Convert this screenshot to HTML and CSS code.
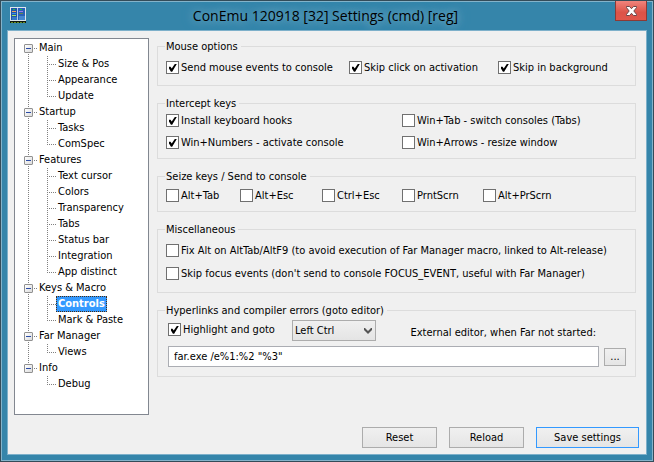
FILE: index.html
```html
<!DOCTYPE html>
<html lang="en">
<head>
<meta charset="utf-8">
<title>ConEmu 120918 [32] Settings (cmd) [reg]</title>
<link rel="stylesheet" href="styles.css">
</head>
<body>
<div class="window">
  <header class="titlebar">
    <svg class="app-icon" viewBox="0 0 16 16" width="16" height="16" shape-rendering="crispEdges" aria-hidden="true">
      <rect width="16" height="14" fill="#dfe6ee"/>
      <rect x="1" y="1" width="6" height="12" fill="#2054a8"/>
      <rect x="8" y="1" width="7" height="12" fill="#2860b8"/>
      <rect x="7" y="1" width="1" height="12" fill="#b8cce4"/>
      <rect x="2" y="10" width="5" height="3" fill="#3478c8"/>
      <rect x="9" y="9" width="6" height="4" fill="#4588d0"/>
      <rect x="3" y="2" width="2" height="1" fill="#18c050"/>
      <rect x="10" y="2" width="2" height="1" fill="#18c050"/>
      <rect x="2" y="4" width="4" height="1" fill="#e8a060"/>
      <rect x="2" y="6" width="4" height="1" fill="#3c90f0"/>
      <rect x="2" y="8" width="4" height="1" fill="#a0e868"/>
      <rect x="9" y="4" width="4" height="1" fill="#a078e8"/>
      <rect x="9" y="6" width="4" height="1" fill="#688850"/>
      <rect y="14" width="16" height="2" fill="#101810"/>
      <path d="M1 15.500h15" stroke="#688c20" stroke-dasharray="2 1"/>
    </svg>
    <h1 class="title">ConEmu 120918 [32] Settings (cmd) [reg]</h1>
    <button class="close" type="button" aria-label="Close">
      <svg viewBox="0 0 11 10" width="11" height="10" aria-hidden="true"><path d="M.5.500h3L5.500 2.700 7.500.500h3v1.200L7.800 5l2.700 3.300v1.200h-3L5.500 7.300 3.500 9.500h-3V8.300L3.200 5 .5 1.700z" fill="#fff" stroke="#6b4648"/></svg>
    </button>
  </header>
  <form class="dialog">
    <div class="main">
      <nav class="tree" aria-label="Settings pages">
        <ul class="roots">
          <li><div class="root"><button class="toggle" type="button" aria-label="Collapse Main"></button><a href="#">Main</a></div>
            <ul class="leaves"><li><a href="#">Size &amp; Pos</a></li><li><a href="#">Appearance</a></li><li><a href="#">Update</a></li></ul></li>
          <li><div class="root"><button class="toggle" type="button" aria-label="Collapse Startup"></button><a href="#">Startup</a></div>
            <ul class="leaves"><li><a href="#">Tasks</a></li><li><a href="#">ComSpec</a></li></ul></li>
          <li><div class="root"><button class="toggle" type="button" aria-label="Collapse Features"></button><a href="#">Features</a></div>
            <ul class="leaves"><li><a href="#">Text cursor</a></li><li><a href="#">Colors</a></li><li><a href="#">Transparency</a></li><li><a href="#">Tabs</a></li><li><a href="#">Status bar</a></li><li><a href="#">Integration</a></li><li><a href="#">App distinct</a></li></ul></li>
          <li><div class="root"><button class="toggle" type="button" aria-label="Collapse Keys &amp; Macro"></button><a href="#">Keys &amp; Macro</a></div>
            <ul class="leaves"><li><a class="selected" href="#" aria-current="page">Controls</a></li><li><a href="#">Mark &amp; Paste</a></li></ul></li>
          <li><div class="root"><button class="toggle" type="button" aria-label="Collapse Far Manager"></button><a href="#">Far Manager</a></div>
            <ul class="leaves"><li><a href="#">Views</a></li></ul></li>
          <li><div class="root"><button class="toggle" type="button" aria-label="Collapse Info"></button><a href="#">Info</a></div>
            <ul class="leaves"><li><a href="#">Debug</a></li></ul></li>
        </ul>
      </nav>
      <div class="groups">
        <fieldset class="mouse">
          <legend>Mouse options</legend>
          <label class="check"><input type="checkbox" checked>Send mouse events to console</label>
          <label class="check"><input type="checkbox" checked>Skip click on activation</label>
          <label class="check"><input type="checkbox" checked>Skip in background</label>
        </fieldset>
        <fieldset class="intercept">
          <legend>Intercept keys</legend>
          <label class="check"><input type="checkbox" checked>Install keyboard hooks</label>
          <label class="check"><input type="checkbox">Win+Tab - switch consoles (Tabs)</label>
          <label class="check"><input type="checkbox" checked>Win+Numbers - activate console</label>
          <label class="check"><input type="checkbox">Win+Arrows - resize window</label>
        </fieldset>
        <fieldset class="seize">
          <legend>Seize keys / Send to console</legend>
          <label class="check"><input type="checkbox">Alt+Tab</label>
          <label class="check"><input type="checkbox">Alt+Esc</label>
          <label class="check"><input type="checkbox">Ctrl+Esc</label>
          <label class="check"><input type="checkbox">PrntScrn</label>
          <label class="check"><input type="checkbox">Alt+PrScrn</label>
        </fieldset>
        <fieldset class="misc">
          <legend>Miscellaneous</legend>
          <label class="check"><input type="checkbox">Fix Alt on AltTab/AltF9 (to avoid execution of Far Manager macro, linked to Alt-release)</label>
          <label class="check"><input type="checkbox">Skip focus events (don't send to console FOCUS_EVENT, useful with Far Manager)</label>
        </fieldset>
        <fieldset class="links">
          <legend>Hyperlinks and compiler errors (goto editor)</legend>
          <div class="row goto">
            <label class="check"><input type="checkbox" checked>Highlight and goto</label>
            <div class="combo">
              <select aria-label="Modifier key"><option>Left Ctrl</option></select>
              <svg class="chevron" viewBox="0 0 8 6" width="8" height="6" aria-hidden="true"><path d="M0 0h1l3 3 3-3h1v2L4 6 0 2z" fill="#555"/></svg>
            </div>
            <label class="caption" for="editor">External editor, when Far not started:</label>
          </div>
          <div class="row">
            <input class="field" id="editor" type="text" value="far.exe /e%1:%2 &quot;%3&quot;">
            <button class="button browse" type="button" aria-label="Browse">...</button>
          </div>
        </fieldset>
      </div>
    </div>
    <footer class="actions">
      <button class="button" type="reset">Reset</button>
      <button class="button" type="button">Reload</button>
      <button class="button primary" type="submit">Save settings</button>
    </footer>
  </form>
</div>
</body>
</html>
```
FILE: styles.css
```css
* { box-sizing: border-box; }

body {
  margin: 0;
  font: 11px/16px "DejaVu Sans Condensed", "DejaVu Sans", sans-serif;
  color: #000;
}

button, input, select { font: inherit; color: inherit; }
ul { margin: 0; padding: 0; list-style: none; }
a { color: inherit; text-decoration: none; }

.window {
  display: flex;
  flex-direction: column;
  min-height: 100vh;
  padding: 0 5px 5px;
  border: 1px solid #344c59;
  background: #3585aa;
  box-shadow: inset 0 0 0 1px #83b3ca;
}

/* Title bar */
.titlebar {
  display: flex;
  align-items: flex-start;
  height: 30px;
  padding-left: 4px;
}
.app-icon { flex: none; margin-top: 6px; }
.title {
  flex: 1;
  margin: 0;
  padding-left: 10px;
  font: 14px/30px "Open Sans", sans-serif;
  text-align: center;
  text-shadow: 0 0 8px #78afc8, 0 0 12px #78afc8;
}
.close {
  display: flex;
  align-items: center;
  justify-content: center;
  width: 32px;
  height: 20px;
  margin-right: 1px;
  padding: 0;
  border: 1px solid #8c3a35;
  border-top: 0;
  background: linear-gradient(#f0847c, #dc5348 60%, #e0564a);
}

.dialog {
  display: flex;
  flex: 1;
  flex-direction: column;
  gap: 12px;
  margin: 0 2px 2px;
  padding: 7px 7px 6px 6px;
  outline: 1px solid #7db0ca;
  background: #f0f0f0;
}
.main { display: flex; flex: 1; gap: 8px; }

/* Page tree */
.tree {
  flex: none;
  width: 135px;
  padding: 1px 0 1px 9px;
  border: 1px solid #828790;
  background: #fff;
}
.root, .leaves li { display: flex; align-items: center; height: 16px; }
.root { gap: 1px; }
.root::before, .leaves li::before { content: ""; height: 1px; background: repeating-linear-gradient(90deg, #808080 0 1px, #fff 1px 2px); }
.root::before { order: 1; width: 4px; }
.root a { order: 2; }
.leaves li::before { width: 9px; }
.roots > li { background: repeating-linear-gradient(#808080 0 1px, #fff 1px 2px) 4px 0 / 1px 100% no-repeat; }
.roots > li:first-child { background-position: 4px 8px; }
.roots > li:last-child { background-size: 1px 8px; }
.leaves li {
  margin-left: 23px;
  background: repeating-linear-gradient(#808080 0 1px, transparent 1px 2px) 0 0 / 1px 100% no-repeat;
}
.leaves li:last-child { background-size: 1px 8px; }
.leaves a { padding: 0 2px; }
.leaves a.selected {
  outline: 1px dotted #4a2c10;
  outline-offset: -1px;
  background: #3399ff;
  color: #fff;
  font-weight: bold;
}
.toggle {
  display: flex;
  align-items: center;
  justify-content: center;
  width: 9px;
  height: 9px;
  padding: 0;
  border: 1px solid #919191;
  border-radius: 1px;
  background: linear-gradient(135deg, #fff, #dcdcdc);
}
.toggle::before { content: ""; width: 5px; height: 1px; background: #2b4ca6; }

/* Option groups */
.groups { display: flex; flex: 1; flex-direction: column; gap: 10px; min-width: 0; padding: 1px 3px 0 0; }
fieldset {
  display: grid;
  align-items: center;
  min-width: 0;
  margin: 0;
  padding: 0 8px;
  border: 1px solid #dcdcdc;
}
legend { padding: 0 3px 0 1px; line-height: 15px; margin-left: -1px; }
.mouse { grid-template-columns: 183fr 149fr 129fr; padding-top: 5px; padding-bottom: 9px; }
.intercept { grid-template-columns: 236fr 225fr; row-gap: 5px; padding-top: 1px; padding-bottom: 7px; }
.seize { grid-template-columns: 74fr 82fr 80fr 81fr 144fr; padding-top: 3px; padding-bottom: 7px; }
.misc { row-gap: 6px; padding-top: 5px; padding-bottom: 10px; }
.links { row-gap: 5px; padding: 2px 9px 9px 10px; }
.links legend { margin-left: -3px; }

.check { display: flex; align-items: center; gap: 2px; height: 17px; white-space: nowrap; }
.check input {
  flex: none;
  appearance: none;
  width: 13px;
  height: 13px;
  margin: 0;
  border: 1px solid #707070;
  background: #fff;
}
.check input:checked::before {
  content: "";
  display: block;
  width: 11px;
  height: 11px;
  background: #000;
  clip-path: polygon(18% 43%, 32% 43%, 43% 59%, 71% 18%, 89% 18%, 47% 89%, 36% 89%, 18% 60%);
}

.row { display: flex; align-items: center; gap: 5px; }
.goto { display: grid; grid-template-columns: 124px 84px 1fr; gap: 0; }
.goto .check { height: 19px; align-self: start; }
.combo { position: relative; }
.combo select {
  display: block;
  appearance: none;
  width: 100%;
  height: 21px;
  padding: 0 2px;
  border: 1px solid #acacac;
  border-radius: 0;
  background: linear-gradient(#f0f0f0, #e4e4e4);
}
.chevron { position: absolute; top: 8px; right: 4px; pointer-events: none; }
.caption { justify-self: end; padding: 4px 30px 0 0; line-height: 17px; white-space: nowrap; }
.field { flex: 1; min-width: 0; height: 21px; padding: 0 5px; border: 1px solid #abadb3; background: #fff; }

.button {
  min-width: 75px;
  height: 21px;
  padding: 0;
  border: 1px solid #acacac;
  background: linear-gradient(#f0f0f0, #e5e5e5);
}
.browse { min-width: 22px; height: 18px; line-height: 14px; }
.primary { min-width: 103px; border-color: #3399ff; }
.actions { display: flex; justify-content: flex-end; gap: 12px; }
```
